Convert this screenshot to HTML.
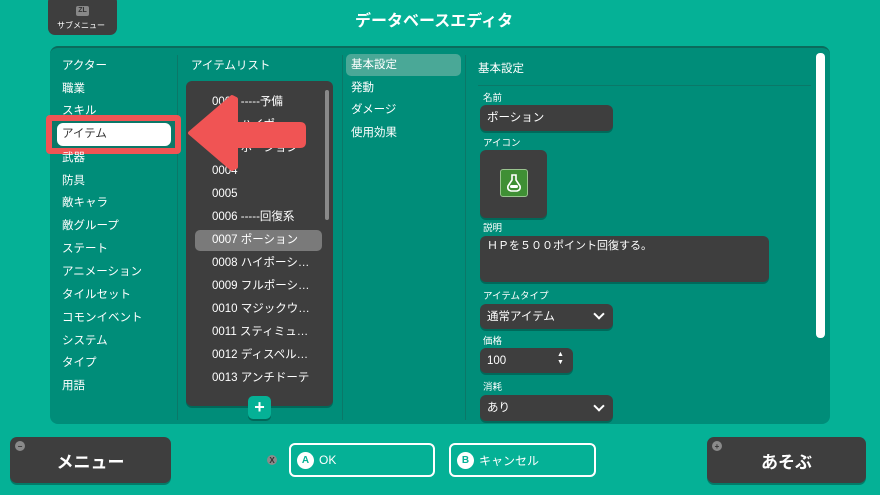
<!DOCTYPE html>
<html><head><meta charset="utf-8"><style>
*{margin:0;padding:0;box-sizing:border-box}
body{width:880px;height:495px;background:#05b196;font-family:"Liberation Sans","Noto Sans CJK JP",sans-serif;color:#fff;position:relative;overflow:hidden}
.a{position:absolute}
.t{position:absolute;font-size:11.5px;white-space:nowrap;line-height:14px}
.box{position:absolute;background:#3e3e3e;border-radius:6px;box-shadow:0 2px 0 rgba(0,0,0,.25)}
.lbl{position:absolute;font-size:9.5px;line-height:11px}
.btn{position:absolute;background:#3e3e3e;border-radius:7px;box-shadow:0 2px 0 rgba(0,0,0,.3);font-weight:bold;font-size:17px;display:flex;align-items:center;justify-content:center}
.ob{position:absolute;border:2px solid #fff;border-radius:6px;font-size:12px;display:flex;align-items:center;padding-left:6px}
.circ{width:17px;height:17px;border-radius:50%;background:#fff;color:#05b196;font-size:10px;font-weight:bold;display:flex;align-items:center;justify-content:center;margin-right:5px}
.mini{position:absolute;width:10px;height:10px;border-radius:50%;background:#8a8a8a;color:#333;font-size:8px;display:flex;align-items:center;justify-content:center;font-weight:bold}
.chev{position:absolute;width:8px;height:8px;border-right:2px solid #fff;border-bottom:2px solid #fff;transform:rotate(45deg)}
</style></head><body>
<div class="a" style="left:48px;top:-5px;width:69px;height:40px;background:#3e3e3e;border-radius:7px"></div>
<div class="a" style="left:76px;top:6px;width:13px;height:10px;background:#888;border-radius:2px;font-size:7px;color:#333;text-align:center;line-height:10px;font-weight:bold">ZL</div>
<div class="t" style="left:57px;top:19px;font-size:8px">サブメニュー</div>
<div class="t" style="left:355px;top:12px;font-size:16px;font-weight:bold;line-height:20px">データベースエディタ</div>

<div class="a" style="left:50px;top:46px;width:780px;height:378px;background:#008d79;border-radius:8px;border-top:2px solid #0b6b5c"></div>
<div class="a" style="left:177px;top:55px;width:1px;height:365px;background:#0b7868"></div>
<div class="a" style="left:342px;top:55px;width:1px;height:365px;background:#0b7868"></div>
<div class="a" style="left:465px;top:55px;width:1px;height:365px;background:#0b7868"></div>
<div class="a" style="left:816px;top:53px;width:9px;height:285px;background:#fff;border-radius:4px"></div>

<div class="t" style="left:62px;top:59px">アクター</div>
<div class="t" style="left:62px;top:82px">職業</div>
<div class="t" style="left:62px;top:104px">スキル</div>
<div class="a" style="left:46px;top:115px;width:135px;height:39px;background:#f05454;border-radius:4px"></div>
<div class="a" style="left:52px;top:121px;width:123px;height:27px;background:#0b7868"></div>
<div class="a" style="left:57px;top:123px;width:114px;height:23px;background:#fff;border-radius:6px"></div>
<div class="t" style="left:62px;top:127px;color:#333">アイテム</div>
<div class="t" style="left:62px;top:151px">武器</div>
<div class="t" style="left:62px;top:174px">防具</div>
<div class="t" style="left:62px;top:196px">敵キャラ</div>
<div class="t" style="left:62px;top:219px">敵グループ</div>
<div class="t" style="left:62px;top:242px">ステート</div>
<div class="t" style="left:62px;top:265px">アニメーション</div>
<div class="t" style="left:62px;top:288px">タイルセット</div>
<div class="t" style="left:62px;top:311px">コモンイベント</div>
<div class="t" style="left:62px;top:334px">システム</div>
<div class="t" style="left:62px;top:356px">タイプ</div>
<div class="t" style="left:62px;top:379px">用語</div>

<div class="t" style="left:191px;top:59px">アイテムリスト</div>
<div class="box" style="left:186px;top:81px;width:147px;height:325px"></div>
<div class="a" style="left:325px;top:90px;width:4px;height:130px;background:#8a8a8a;border-radius:2px"></div>
<div class="a" style="left:195px;top:230px;width:127px;height:21px;background:#7a7a7a;border-radius:5px"></div>
<div class="t" style="left:212px;top:95px">0001 -----予備</div>
<div class="t" style="left:212px;top:118px">0002 ハイポ</div>
<div class="t" style="left:212px;top:141px">0003 ポーション</div>
<div class="t" style="left:212px;top:164px">0004</div>
<div class="t" style="left:212px;top:187px">0005</div>
<div class="t" style="left:212px;top:210px">0006 -----回復系</div>
<div class="t" style="left:212px;top:233px">0007 ポーション</div>
<div class="t" style="left:212px;top:256px">0008 ハイポーシ…</div>
<div class="t" style="left:212px;top:279px">0009 フルポーシ…</div>
<div class="t" style="left:212px;top:302px">0010 マジックウ…</div>
<div class="t" style="left:212px;top:325px">0011 スティミュ…</div>
<div class="t" style="left:212px;top:348px">0012 ディスペル…</div>
<div class="t" style="left:212px;top:371px">0013 アンチドーテ</div>
<div class="a" style="left:248px;top:396px;width:23px;height:23px;background:#05b196;border-radius:5px;font-size:18px;font-weight:bold;text-align:center;line-height:22px;box-shadow:0 2px 0 rgba(0,0,0,.25)">+</div>

<svg class="a" style="left:0;top:0" width="880" height="495"><path d="M190 133 L232 97 L236 99 L236 124 L300 124 Q304 124 304 128 L304 142 Q304 146 300 146 L236 146 L236 167 L232 169 Z" fill="#f05454" stroke="#f05454" stroke-width="4" stroke-linejoin="round"/></svg>

<div class="a" style="left:346px;top:54px;width:115px;height:22px;background:#4aa897;border-radius:5px"></div>
<div class="t" style="left:351px;top:58px">基本設定</div>
<div class="t" style="left:351px;top:81px">発動</div>
<div class="t" style="left:351px;top:103px">ダメージ</div>
<div class="t" style="left:351px;top:126px">使用効果</div>

<div class="t" style="left:478px;top:62px">基本設定</div>
<div class="a" style="left:478px;top:85px;width:333px;height:1px;background:#0b7868"></div>
<div class="lbl" style="left:483px;top:93px">名前</div>
<div class="box" style="left:480px;top:105px;width:133px;height:26px"></div>
<div class="t" style="left:487px;top:111px">ポーション</div>
<div class="lbl" style="left:483px;top:138px">アイコン</div>
<div class="box" style="left:480px;top:150px;width:67px;height:68px"></div>
<div class="a" style="left:500px;top:169px;width:28px;height:28px;background:#3f8f34;border:1px solid #9ac48f;border-radius:3px"></div>
<svg class="a" style="left:500px;top:169px" width="28" height="28"><path d="M12 6 h4 v5 l4 6 q1 4 -3 5 h-6 q-4 -1 -3 -5 l4 -6 z" fill="none" stroke="#fff" stroke-width="1.6"/><rect x="10" y="16" width="8" height="3" rx="1.5" fill="#fff"/></svg>
<div class="lbl" style="left:483px;top:223px">説明</div>
<div class="box" style="left:480px;top:236px;width:289px;height:46px"></div>
<div class="t" style="left:487px;top:239px;font-size:11px">ＨＰを５００ポイント回復する。</div>
<div class="lbl" style="left:483px;top:291px">アイテムタイプ</div>
<div class="box" style="left:480px;top:304px;width:133px;height:25px"></div>
<div class="t" style="left:487px;top:310px">通常アイテム</div>
<div class="chev" style="left:595px;top:310px"></div>
<div class="lbl" style="left:483px;top:336px">価格</div>
<div class="box" style="left:480px;top:348px;width:93px;height:25px"></div>
<div class="t" style="left:487px;top:354px">100</div>
<div class="a" style="left:557px;top:351px;font-size:7px;line-height:8px">▲<br>▼</div>
<div class="lbl" style="left:483px;top:382px">消耗</div>
<div class="box" style="left:480px;top:395px;width:133px;height:26px"></div>
<div class="t" style="left:487px;top:401px">あり</div>
<div class="chev" style="left:595px;top:402px"></div>

<div class="btn" style="left:10px;top:437px;width:161px;height:46px">メニュー</div>
<div class="mini" style="left:15px;top:441px">−</div>
<div class="btn" style="left:707px;top:437px;width:159px;height:46px">あそぶ</div>
<div class="mini" style="left:712px;top:441px">+</div>
<div class="mini" style="left:267px;top:455px">X</div>
<div class="ob" style="left:289px;top:443px;width:146px;height:34px"><div class="circ">A</div>OK</div>
<div class="ob" style="left:449px;top:443px;width:147px;height:34px"><div class="circ">B</div>キャンセル</div>
</body></html>
